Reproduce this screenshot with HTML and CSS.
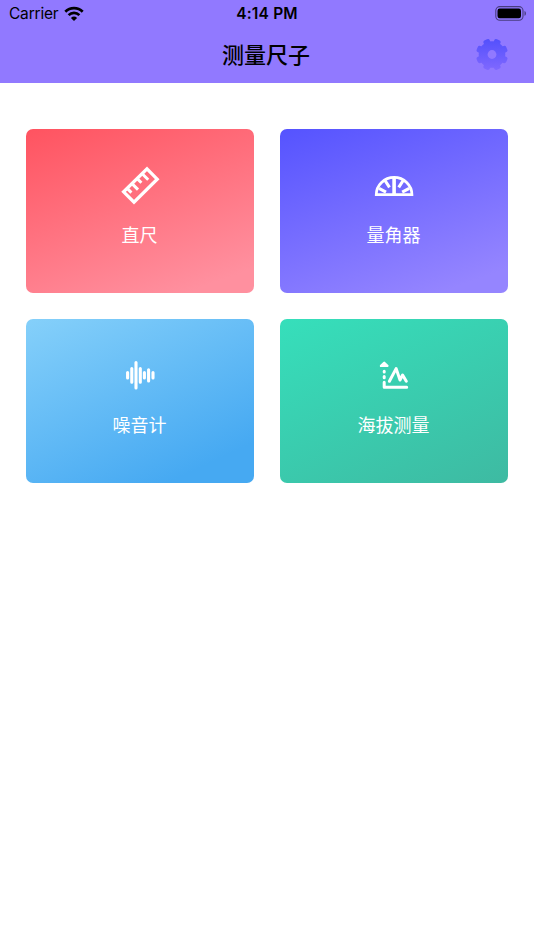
FILE: index.html
```
<!DOCTYPE html>
<html lang="zh-CN">
<head>
    <meta charset="UTF-8">
    <title>测量尺子</title>
    <link rel="stylesheet" href="styles.css">
</head>
<body>
    <header>
        <div class="status-bar">
            <div class="carrier">
                <span>Carrier</span>
                <svg class="wifi" width="20" height="16" viewBox="0 0 20 16">
                    <path d="M1.3 5.7a12.4 12.4 0 0 1 17.4 0M4.6 9.1a7.7 7.7 0 0 1 10.8 0" fill="none" stroke="#000" stroke-width="2.7"/>
                    <path d="M10 15l-3.1-3.1a4.5 4.5 0 0 1 6.2 0z"/>
                </svg>
            </div>
            <span class="time">4:14 PM</span>
            <svg class="battery" width="32" height="15" viewBox="0 0 32 15">
                <rect x=".8" y=".6" width="27.2" height="13.6" rx="4" fill="none" stroke="#000" stroke-opacity=".5" stroke-width="1.1"/>
                <rect x="2.5" y="2.5" width="23.5" height="9.8" rx="2.2"/>
                <path d="M29.5 5c1.9.6 1.9 4.2 0 4.8z" opacity=".5"/>
            </svg>
        </div>
        <div class="nav-bar">
            <h1>测量尺子</h1>
            <svg class="settings" width="32" height="32" viewBox="0 0 32 32">
                <defs>
                    <linearGradient id="gear-fill" x1="0" y1="0" x2="0" y2="1">
                        <stop offset="0" stop-color="#5350fc"/>
                        <stop offset="1" stop-color="#8169ff"/>
                    </linearGradient>
                    <mask id="gear">
                        <g fill="#fff">
                            <circle cx="16" cy="15.5" r="13.3"/>
                            <rect x="12.6" y="-.5" width="6.8" height="32" rx="2.2" transform="rotate(22.5 16 15.5)"/>
                            <rect x="12.6" y="-.5" width="6.8" height="32" rx="2.2" transform="rotate(67.5 16 15.5)"/>
                            <rect x="12.6" y="-.5" width="6.8" height="32" rx="2.2" transform="rotate(112.5 16 15.5)"/>
                            <rect x="12.6" y="-.5" width="6.8" height="32" rx="2.2" transform="rotate(157.5 16 15.5)"/>
                        </g>
                        <circle cx="16" cy="15.5" r="4.4" fill="#000"/>
                    </mask>
                </defs>
                <rect width="32" height="32" fill="url(#gear-fill)" mask="url(#gear)"/>
            </svg>
        </div>
    </header>

    <main class="tools">
        <div class="card ruler">
            <svg width="52" height="52" viewBox="0 0 52 52">
                <path d="M33 8.8L43.2 19.2L20 42.2L9.6 31.8Z" stroke-width="3.3"/>
                <path d="M13.2 28.4l4.2 4.2M18 23.6l6 6M23.2 18.6l4.2 4.2M28.2 13.8l6 6" stroke-width="3"/>
            </svg>
            <span>直尺</span>
        </div>
        <div class="card protractor">
            <svg width="52" height="52" viewBox="0 0 52 52">
                <path d="M8.3 34.7a17.8 17.3 0 0 1 35.6 0Z" stroke-width="2.8"/>
                <path d="M26.1 17v17" stroke-width="3.6"/>
                <path d="M11 28.4l7 3.8M16.7 20l4.8 7.4M35.5 20l-4.8 7.4M41.2 28.4l-7 3.8" stroke-width="3.1"/>
            </svg>
            <span>量角器</span>
        </div>
        <div class="card noise">
            <svg width="52" height="52" viewBox="0 0 52 52">
                <path d="M13.6 22.5v5.5M17.8 18.5v13.7M22 12.5v25.5M26.3 18.5v13.7M30.4 22.5v5.5M34.6 19.8v11.2M39 22.5v5.5" stroke-width="3.1" stroke-linecap="round"/>
            </svg>
            <span>噪音计</span>
        </div>
        <div class="card altitude">
            <svg width="52" height="52" viewBox="0 0 52 52">
                <path d="M16.2 21.3v.8M16.2 26.4v1.3M16.2 32.3v5h22.5" stroke-width="3" stroke-linecap="round" stroke-linejoin="round"/>
                <path d="M21.4 31.3L28.1 18.6L32 30L34.6 25L38.3 31.3" stroke-width="3" stroke-linecap="round" stroke-linejoin="round"/>
                <path d="M16.2 12.8L19.4 15.9H13Z" fill="#fff" stroke-width="2.4" stroke-linejoin="round"/>
            </svg>
            <span>海拔测量</span>
        </div>
    </main>
</body>
</html>
```

FILE: styles.css
```
* {
    box-sizing: border-box;
}

body {
    margin: 0;
    background: #fff;
    font-family: Inter, "Noto Sans CJK SC", sans-serif;
}

header {
    height: 83px;
    background: #9179ff;
    color: #000;
}

.status-bar {
    display: grid;
    grid-template-columns: 1fr auto 1fr;
    align-items: center;
    height: 27px;
    padding: 0 7px 0 9px;
    font-size: 15.5px;
    line-height: 27px;
}

.carrier {
    display: flex;
    align-items: center;
    gap: 6px;
    letter-spacing: -0.2px;
}

.carrier span,
.time {
    padding-top: 1px;
    line-height: 26px;
}

.time {
    margin-right: 2px;
    font-weight: 600;
    letter-spacing: 0.2px;
}

.battery {
    justify-self: end;
}

.nav-bar {
    display: grid;
    grid-template-columns: 1fr auto 1fr;
    align-items: center;
    height: 56px;
    padding: 0 27px 0 25px;
}

h1 {
    grid-column: 2;
    margin: 0;
    font-size: 22px;
    font-weight: 500;
    line-height: 56px;
}

.settings {
    justify-self: end;
    margin-right: -1px;
}

.tools {
    display: grid;
    grid-template-columns: 1fr 1fr;
    gap: 26px;
    padding: 46px 26px;
}

.card {
    display: flex;
    flex-direction: column;
    align-items: center;
    height: 164px;
    padding-top: 31px;
    border-radius: 7px;
    color: #fff;
    font-size: 18px;
    line-height: 26px;
}

.card svg {
    margin-bottom: 11px;
    fill: none;
    stroke: #fff;
}

.card span {
    padding-right: 1px;
}

.ruler {
    background: linear-gradient(160deg, #ff5360, #ff909f 90%);
}

.protractor {
    background: linear-gradient(160deg, #5553ff, #9585ff 90%);
}

.noise {
    background: linear-gradient(155deg, #85d0fa, #46a9f2 85%);
}

.altitude {
    background: linear-gradient(155deg, #36dfbb, #3ebaa2);
}
```
